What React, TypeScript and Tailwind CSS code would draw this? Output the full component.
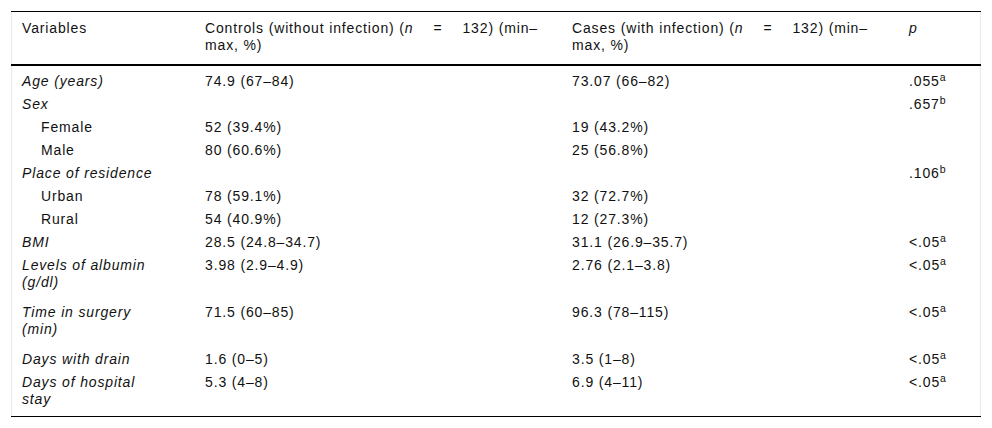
import React from 'react';

type Row = {
	label: React.ReactNode;
	sub?: boolean;
	tall?: boolean;
	controls?: string;
	cases?: string;
	p?: string;
	sup?: string;
};

const rows: Row[] = [
	{ label: 'Age (years)', controls: '74.9 (67–84)', cases: '73.07 (66–82)', p: '.055', sup: 'a' },
	{ label: 'Sex', p: '.657', sup: 'b' },
	{ label: 'Female', sub: true, controls: '52 (39.4%)', cases: '19 (43.2%)' },
	{ label: 'Male', sub: true, controls: '80 (60.6%)', cases: '25 (56.8%)' },
	{ label: 'Place of residence', p: '.106', sup: 'b' },
	{ label: 'Urban', sub: true, controls: '78 (59.1%)', cases: '32 (72.7%)' },
	{ label: 'Rural', sub: true, controls: '54 (40.9%)', cases: '12 (27.3%)' },
	{ label: 'BMI', controls: '28.5 (24.8–34.7)', cases: '31.1 (26.9–35.7)', p: '<.05', sup: 'a' },
	{
		label: (
			<>
				Levels of albumin
				<br />
				(g/dl)
			</>
		),
		tall: true,
		controls: '3.98 (2.9–4.9)',
		cases: '2.76 (2.1–3.8)',
		p: '<.05',
		sup: 'a',
	},
	{
		label: (
			<>
				Time in surgery
				<br />
				(min)
			</>
		),
		tall: true,
		controls: '71.5 (60–85)',
		cases: '96.3 (78–115)',
		p: '<.05',
		sup: 'a',
	},
	{ label: 'Days with drain', controls: '1.6 (0–5)', cases: '3.5 (1–8)', p: '<.05', sup: 'a' },
	{
		label: (
			<>
				Days of hospital
				<br />
				stay
			</>
		),
		tall: true,
		controls: '5.3 (4–8)',
		cases: '6.9 (4–11)',
		p: '<.05',
		sup: 'a',
	},
];

const GroupHeader: React.FC<{ title: string }> = ({ title }) => (
	<>
		<span className="whitespace-nowrap">
			{title} (<i>n</i>
			<span className="inline-block w-[20px]" />=<span className="inline-block w-[20px]" />
			132) (min–
		</span>
		<br />
		max, %)
	</>
);

export default function App() {
	return (
		<div className="min-h-[428px] bg-white pt-[11px] pl-[11px] font-['Liberation_Sans',Arial,sans-serif] text-[14px] leading-[17px] tracking-[0.85px] text-[#111]">
			<div className="w-[970px] border-x border-[#e9e9e9]">
				<table className="w-[970px] -mx-px table-fixed border-collapse border-y border-black">
					<colgroup>
						<col className="w-[183px]" />
						<col className="w-[367px]" />
						<col className="w-[337px]" />
						<col className="w-[83px]" />
					</colgroup>
					<thead>
						<tr className="border-b-2 border-black">
							<th className="h-[52px] pt-2 pb-[10px] pl-[11px] text-left align-top font-normal">Variables</th>
							<th className="pt-2 pb-[10px] pl-[11px] text-left align-top font-normal">
								<GroupHeader title="Controls (without infection)" />
							</th>
							<th className="pt-2 pb-[10px] pl-[11px] text-left align-top font-normal">
								<GroupHeader title="Cases (with infection)" />
							</th>
							<th className="pt-2 pb-[10px] pl-[11px] text-left align-top font-normal italic">p</th>
						</tr>
					</thead>
					<tbody>
						{rows.map((r, i) => {
							const top = i === 0 ? 'pt-[7px]' : 'pt-[5px]';
							const cell = `${top} ${r.tall ? 'pb-[8px]' : 'pb-px'} align-top`;
							return (
								<tr key={i}>
									<td className={`${cell} ${r.sub ? 'pl-[30px]' : 'pl-[11px] italic'}`}>{r.label}</td>
									<td className={`${cell} pl-[11px]`}>{r.controls}</td>
									<td className={`${cell} pl-[11px]`}>{r.cases}</td>
									<td className={`${cell} pl-[11px]`}>
										{r.p}
										{r.sup && <sup>{r.sup}</sup>}
									</td>
								</tr>
							);
						})}
					</tbody>
				</table>
			</div>
		</div>
	);
}
